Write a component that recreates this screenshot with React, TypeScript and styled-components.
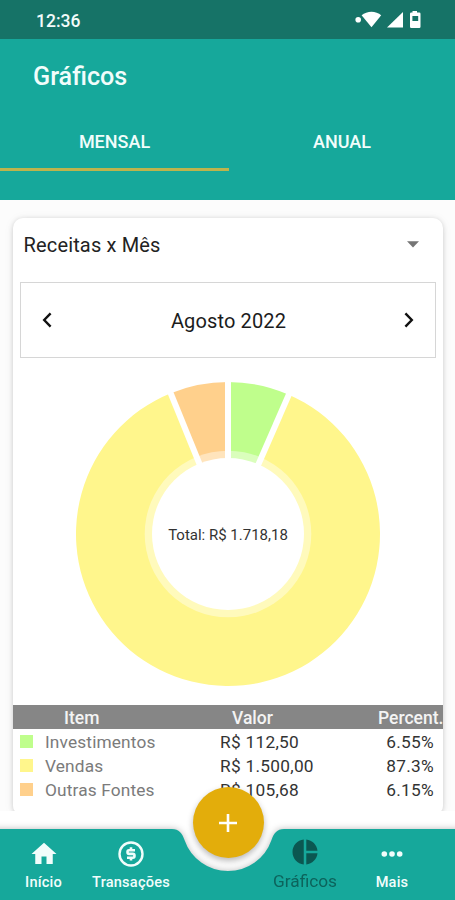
import React from "react";
import styled, { createGlobalStyle } from "styled-components";

const Global = createGlobalStyle`
  *, *::before, *::after { box-sizing: border-box; }
  body { margin: 0; background: #fff; font-family: Roboto, "Liberation Sans", sans-serif; }
`;

const Screen = styled.div`
  position: relative;
  width: 455px;
  height: 900px;
  display: flex;
  flex-direction: column;
  overflow: hidden;
  background: #fff;
`;

const StatusBar = styled.div`
  flex: none;
  height: 39px;
  display: flex;
  align-items: center;
  justify-content: space-between;
  padding: 3px 33px 0 36px;
  background: #167367;
  color: #f2fbfa;
`;

const Clock = styled.span`
  font-size: 17.5px;
  font-weight: 500;
  line-height: 20px;
`;

const StatusIcons = styled.svg`
  display: block;
  width: 68px;
  height: 20px;
  margin-top: -4px;
`;

const Header = styled.header`
  flex: none;
  height: 160.5px;
  display: flex;
  flex-direction: column;
  background: #16a89b;
  color: #f1fdfb;
`;

const Title = styled.h1`
  margin: 0;
  padding: 23px 0 0 33px;
  height: 76px;
  font-size: 25.2px;
  font-weight: 500;
  line-height: 30px;
`;

const Tabs = styled.div`
  display: grid;
  grid-template-columns: 229px 1fr;
  height: 56px;
`;

const Tab = styled.div<{ $active?: boolean }>`
  display: flex;
  align-items: center;
  justify-content: center;
  padding-bottom: ${(p) => (p.$active ? 0 : 3)}px;
  border-bottom: ${(p) => (p.$active ? "3px solid #bdb44c" : "none")};
  font-size: 18px;
  font-weight: 500;
`;

const Content = styled.main`
  flex: none;
  height: 611.5px;
  padding: 18px 12px 0 13px;
  background: #fcfcfc;
  overflow: hidden;
`;

const Card = styled.section`
  height: 596px;
  border-radius: 10px 10px 8px 8px;
  background: #fff;
  box-shadow: 0 1px 5px rgba(0, 0, 0, 0.17), 0 1px 12px rgba(0, 0, 0, 0.05);
  display: flex;
  flex-direction: column;
`;

const Select = styled.div`
  height: 64px;
  padding: 0 24px 10px 10.5px;
  display: flex;
  align-items: center;
  justify-content: space-between;
  color: #222;
  font-size: 20px;
  letter-spacing: 0.16px;
`;

const Caret = styled.svg`
  width: 12px;
  height: 7px;
`;

const MonthPicker = styled.div`
  height: 76px;
  margin: 0 7px;
  padding: 2px 19px 0 20px;
  border: 1.5px solid #d6d6d6;
  display: flex;
  align-items: center;
  justify-content: space-between;
  color: #1c1c1c;
  font-size: 20px;
  letter-spacing: 0.13px;
`;

const Chevron = styled.svg`
  width: 14px;
  height: 18px;
  margin-top: -2px;
  fill: none;
  stroke: #111;
  stroke-width: 2.4;
`;

const ChartArea = styled.div`
  display: grid;
  place-items: center;
  height: 347px;
  padding-top: 7px;
`;

const Donut = styled.svg`
  grid-area: 1 / 1;
  width: 304px;
  height: 304px;
  margin-bottom: 1px;
`;

const Total = styled.span`
  grid-area: 1 / 1;
  z-index: 1;
  font-size: 15px;
  color: #333;
`;

const TableHead = styled.div`
  height: 24px;
  display: grid;
  grid-template-columns: 51px 168px 146px auto;
  align-items: center;
  padding-top: 2px;
  background: #868686;
  color: #f4f4f4;
  font-size: 17.5px;
  font-weight: 500;
  white-space: nowrap;
`;

const Row = styled.div`
  height: 24px;
  display: grid;
  grid-template-columns: 32px 175px 1fr auto;
  align-items: center;
  padding: 2px 9px 0 0;
  font-size: 17.3px;
  color: #333;
`;

const Swatch = styled.i<{ $color: string }>`
  width: 12.5px;
  height: 12.5px;
  margin: 0 0 0 7px;
  background: ${(p) => p.$color};
`;

const Name = styled.span`
  color: #7b7b7b;
  letter-spacing: 0.15px;
`;

const Amount = styled.span`
  letter-spacing: 0.27px;
`;

const Footer = styled.footer`
  flex: none;
  position: relative;
  height: 89px;
`;

const NavShape = styled.svg`
  position: absolute;
  left: 0;
  top: 0;
  width: 455px;
  height: 89px;
`;

const Nav = styled.nav`
  position: relative;
  display: grid;
  grid-template-columns: 87px 88px 87px 86px 88px;
  padding-top: 27px;
`;

const NavItem = styled.div<{ $active?: boolean }>`
  display: flex;
  flex-direction: column;
  align-items: center;
  color: ${(p) => (p.$active ? "#0b5751" : "#f1fdfb")};
  svg { margin-top: ${(p) => (p.$active ? -1 : 1)}px; display: block; }
`;

const NavLabel = styled.span<{ $active?: boolean }>`
  margin-top: ${(p) => (p.$active ? 4 : 3)}px;
  font-size: ${(p) => (p.$active ? 17.3 : 14.6)}px;
  font-weight: ${(p) => (p.$active ? 400 : 500)};
  line-height: 20px;
  letter-spacing: ${(p) => (p.$active ? 0 : 0.2)}px;
  white-space: nowrap;
  opacity: ${(p) => (p.$active ? 0.85 : 1)};
`;

const Fab = styled.button`
  position: absolute;
  left: 192.5px;
  top: -24px;
  width: 71px;
  height: 71px;
  padding: 0;
  border: 0;
  border-radius: 50%;
  background: #e3ad0b;
  box-shadow: 0 3px 6px rgba(0, 0, 0, 0.28);
  display: grid;
  place-items: center;
`;

const rows = [
  { name: "Investimentos", amount: "R$ 112,50", percent: "6.55%", share: 6.55, color: "#bffe8c" },
  { name: "Vendas", amount: "R$ 1.500,00", percent: "87.3%", share: 87.3, color: "#fff68c" },
  { name: "Outras Fontes", amount: "R$ 105,68", percent: "6.15%", share: 6.15, color: "#ffd08c" },
];

const R = 152;
const point = (share: number) => {
  const a = (share / 100) * Math.PI * 2;
  return [R + R * Math.sin(a), R - R * Math.cos(a)];
};

function DonutChart() {
  let start = 0;
  const slices = rows.map((r) => {
    const [x1, y1] = point(start);
    start += r.share;
    const [x2, y2] = point(start);
    return { ...r, x1, y1, d: `M${R} ${R}L${x1} ${y1}A${R} ${R} 0 ${r.share > 50 ? 1 : 0} 1 ${x2} ${y2}Z` };
  });
  return (
    <Donut viewBox="0 0 304 304">
      {slices.map((s) => <path key={s.name} d={s.d} fill={s.color} />)}
      <circle cx={R} cy={R} r="83.3" fill="#fff" fillOpacity="0.42" />
      {slices.map((s) => (
        <line key={s.name} x1={R} y1={R} x2={R + (s.x1 - R) * 1.01} y2={R + (s.y1 - R) * 1.01} stroke="#fff" strokeWidth="6" />
      ))}
      <circle cx={R} cy={R} r="76" fill="#fff" />
    </Donut>
  );
}

export default function App() {
  return (
    <Screen>
      <Global />
      <StatusBar>
        <Clock>12:36</Clock>
        <StatusIcons viewBox="0 0 68 20" fill="#fff">
          <circle cx="4.2" cy="10.7" r="2.8" />
          <path d="M7.6 6.3C13 1.4 22 1.4 27.2 6.3L17.5 18.3Z" />
          <path d="M33 18.5L49 3V18.5Z" />
          <path fillRule="evenodd" d="M58.5 2H63V3.6H65.3Q66.5 3.6 66.5 4.8V17.7Q66.5 19 65.3 19H57.2Q56 19 56 17.7V4.8Q56 3.6 57.2 3.6H58.5ZM58.4 7V12H64.2V7Z" />
        </StatusIcons>
      </StatusBar>
      <Header>
        <Title>Gráficos</Title>
        <Tabs>
          <Tab $active>MENSAL</Tab>
          <Tab>ANUAL</Tab>
        </Tabs>
      </Header>
      <Content>
        <Card>
          <Select>
            Receitas x Mês
            <Caret viewBox="0 0 12 7"><path d="M0 0.3H12L6 6.5Z" fill="#757575" /></Caret>
          </Select>
          <MonthPicker>
            <Chevron viewBox="0 0 14 18"><path d="M9.6 2.4L3.2 9L9.6 15.6" /></Chevron>
            <span>Agosto 2022</span>
            <Chevron viewBox="0 0 14 18"><path d="M3.4 2.4L9.8 9L3.4 15.6" /></Chevron>
          </MonthPicker>
          <ChartArea>
            <DonutChart />
            <Total>Total: R$ 1.718,18</Total>
          </ChartArea>
          <TableHead>
            <span />
            <span>Item</span>
            <span>Valor</span>
            <span>Percent.</span>
          </TableHead>
          {rows.map((r) => (
            <Row key={r.name}>
              <Swatch $color={r.color} />
              <Name>{r.name}</Name>
              <Amount>{r.amount}</Amount>
              <Amount>{r.percent}</Amount>
            </Row>
          ))}
        </Card>
      </Content>
      <Footer>
        <NavShape viewBox="0 0 455 89">
          <defs>
            <filter id="navShadow" x="-5%" y="-30%" width="110%" height="160%">
              <feGaussianBlur stdDeviation="3.8" />
            </filter>
          </defs>
          <path filter="url(#navShadow)" fill="#000" fillOpacity="0.27" d="M-10 18H172C179 18 182 22 184.5 29A46 46 0 0 0 271.5 29C274 22 277 18 284 18H465V100H-10Z" />
          <path fill="#16a89b" d="M0 18H172C179 18 182 22 184.5 29A46 46 0 0 0 271.5 29C274 22 277 18 284 18H455V89H0Z" />
        </NavShape>
        <Nav>
          <NavItem>
            <svg width="30" height="30" viewBox="0 0 24 24" fill="currentColor"><path d="M10 20v-6h4v6h5v-8h3L12 3 2 12h3v8z" /></svg>
            <NavLabel>Início</NavLabel>
          </NavItem>
          <NavItem>
            <svg width="30" height="30" viewBox="0 0 30 30" fill="none" stroke="currentColor">
              <circle cx="15" cy="15" r="11.5" strokeWidth="2.4" />
              <path d="M19 11.2H13Q11.5 11.2 11.5 13Q11.5 14.9 13.2 14.9H16.8Q18.5 14.9 18.500 16.8Q18.5 18.700 16.8 18.700H11M15 8.300V11M15 18.700V21.600" strokeWidth="2.6" />
            </svg>
            <NavLabel>Transações</NavLabel>
          </NavItem>
          <span />
          <NavItem $active>
            <svg width="30" height="30" viewBox="0 0 24 24" fill="currentColor"><path d="M11 2v20c-5.07-.5-9-4.79-9-10s3.93-9.5 9-10zm2.03 0v8.99H22c-.47-4.74-4.24-8.52-8.97-8.99zm0 11.01V22c4.74-.47 8.5-4.25 8.97-8.99h-8.97z" /></svg>
            <NavLabel $active>Gráficos</NavLabel>
          </NavItem>
          <NavItem>
            <svg width="30" height="30" viewBox="0 0 30 30" fill="currentColor"><circle cx="7.3" cy="15" r="2.8" /><circle cx="15" cy="15" r="2.8" /><circle cx="22.7" cy="15" r="2.8" /></svg>
            <NavLabel>Mais</NavLabel>
          </NavItem>
        </Nav>
        <Fab aria-label="Adicionar">
          <svg width="20" height="20" viewBox="0 0 20 20" stroke="#fff" strokeWidth="2.6"><path d="M10 1V19M1 10H19" /></svg>
        </Fab>
      </Footer>
    </Screen>
  );
}
